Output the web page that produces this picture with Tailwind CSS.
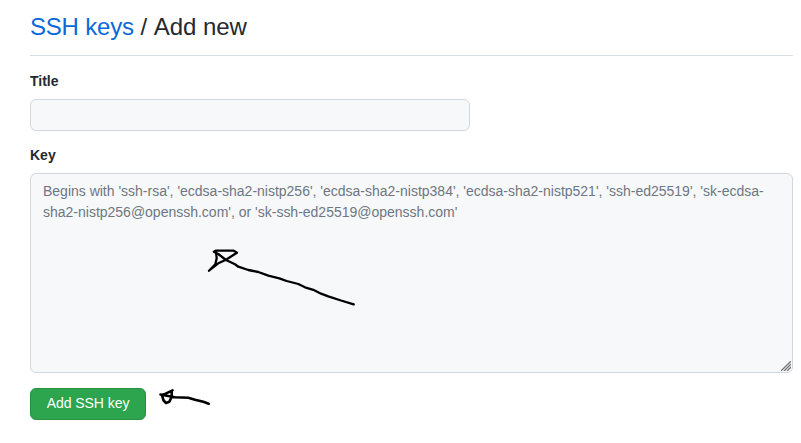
<!DOCTYPE html>
<html lang="en">
<head>
<meta charset="utf-8">
<title>SSH keys</title>
<script src="https://cdn.jsdelivr.net/npm/@tailwindcss/browser@4"></script>
</head>
<body class="bg-white font-['Liberation_Sans',Arial,sans-serif] text-sm text-[#24292f]">
<main class="relative h-[443px] overflow-hidden pl-[30px] pr-2 pt-[9px]">
  <h1 class="mb-[15px] border-b border-[#d8dee4] pb-2.5 text-2xl leading-9"><a class="tracking-[-0.2px] text-[#0969da]">SSH keys</a><span> / </span><span class="tracking-[-0.05px]">Add new</span></h1>
  <form class="flex flex-col items-start">
    <label class="mb-[7px] block text-sm leading-[21px] font-bold" for="title">Title</label>
    <input id="title" class="mb-3.5 h-8 w-[440px] rounded-md border border-[#d0d7de] bg-[#f6f8fa] px-3">
    <label class="mb-[7px] block text-sm leading-[21px] font-bold" for="key">Key</label>
    <div class="relative mb-[15px] w-full">
      <textarea id="key" class="block h-[200px] w-full resize-none rounded-md border border-[#d0d7de] bg-[#f6f8fa] px-3 py-[7px] leading-[21px] tracking-[-0.005px] placeholder:text-[#6e7781]" placeholder="Begins with 'ssh-rsa', 'ecdsa-sha2-nistp256', 'ecdsa-sha2-nistp384', 'ecdsa-sha2-nistp521', 'ssh-ed25519', 'sk-ecdsa-sha2-nistp256@openssh.com', or 'sk-ssh-ed25519@openssh.com'"></textarea>
      <svg class="absolute right-0.5 bottom-0.5" width="10" height="10" viewBox="0 0 10 10" stroke="#777" stroke-width="1.3"><path d="M0 10L10 0M3 10L10 3M6 10L10 6"/></svg>
    </div>
    <button type="button" class="h-8 w-[116px] rounded-md border border-[#26903f] bg-[#2da44e] pb-0.5 text-sm leading-5 tracking-[-0.05px] text-white">Add SSH key</button>
  </form>
  <svg class="pointer-events-none absolute inset-0" width="801" height="443" viewBox="0 0 801 443" fill="none" stroke="#000" stroke-width="2.3" stroke-linecap="round" stroke-linejoin="round">
    <path d="M353.7 304.3L341 300.5L328.3 296.3L321 293.7L313.3 289.8L305 287.3L298.3 284L286.7 281L279.3 278.3L268.3 275.7L258.3 272L248.3 270L238.3 266.7L235 264.3L226 260L218.3 254L213.8 251.7L216 250.6L233.3 250.6L237 252.7L226 259.7L218.3 263.3L209 270.7L215.3 264.3L216.7 258.3L216 252"/>
    <path stroke-width="2.6" d="M208.7 403.7L203.3 401.7L195 399.7L188.3 397.7L175 397.3L166.7 395.7L160.5 394.5M172.5 390.3L162 395.3L163.6 400.5L166 403L169.3 401.7L171.7 396.7L171.7 391.5"/>
  </svg>
</main>
</body>
</html>
